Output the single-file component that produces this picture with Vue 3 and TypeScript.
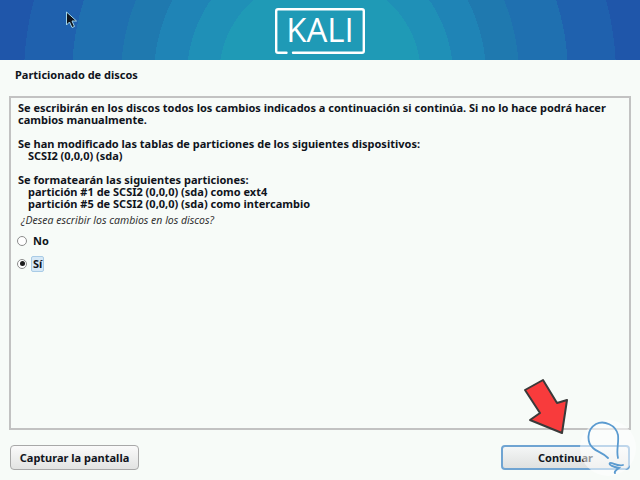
<template>
  <div class="installer">
    <header class="banner">
      <svg class="logo" width="90" height="46" viewBox="0 0 90 46" aria-hidden="true">
        <path d="M11.500 44.800 H3 a1.800 1.800 0 0 1 -1.800 -1.800 V3 a1.800 1.800 0 0 1 1.800 -1.800 H87 a1.800 1.800 0 0 1 1.800 1.800 V43 a1.800 1.800 0 0 1 -1.800 1.800 H18" fill="none" stroke="#fff" stroke-width="2.400" stroke-linecap="round" />
      </svg>
      <span class="logo-text">KALI</span>
    </header>

    <main class="content">
      <h1 class="step-title">Particionado de discos</h1>
      <section class="frame">
        <p class="line">Se escribirán en los discos todos los cambios indicados a continuación si continúa. Si no lo hace podrá hacer<br />cambios manualmente.</p>
        <p class="line gap">Se han modificado las tablas de particiones de los siguientes dispositivos:<br /><span class="indent">SCSI2 (0,0,0) (sda)</span></p>
        <p class="line gap">
          Se formatearán las siguientes particiones:<br />
          <span class="indent">partición #1 de SCSI2 (0,0,0) (sda) como ext4</span><br />
          <span class="indent">partición #5 de SCSI2 (0,0,0) (sda) como intercambio</span>
        </p>
        <p class="question">¿Desea escribir los cambios en los discos?</p>
        <div v-for="option in options" :key="option" class="option">
          <span class="radio" :class="{ checked: option === selected }"></span>
          <span class="option-label" :class="{ focused: option === selected }">{{ option }}</span>
        </div>
      </section>
      <footer class="actions">
        <button class="btn">Capturar la pantalla</button>
        <button class="btn primary">Continuar</button>
      </footer>
    </main>

    <svg class="cursor" width="14" height="18" viewBox="0 0 14 18" aria-hidden="true">
      <path d="M1.500 1 V14 L4.500 11 L7 16.500 L9.500 15.500 L7 10 H11.500 Z" fill="#10141c" stroke="#9fd4ea" stroke-width="1" />
    </svg>

    <svg class="arrow" width="52" height="62" viewBox="0 0 52 62" aria-hidden="true">
      <path d="M23 5 L5 15 L20 38 L10 45 L42 58 L47 25 L37 28 Z" fill="#f83b3c" stroke="#3a3a3a" stroke-width="2" stroke-linejoin="round" />
    </svg>

    <div class="watermark">
      <svg width="56" height="56" viewBox="0 0 56 56" aria-hidden="true">
        <path d="M28 38 C22 32 17 32 13 28 C7 23 6 10 16 4 C24 0 36 5 38 15 C39 24 36 30 38 38 M43 45 C38 47 32 42 30 43 C28 45 34 47 39 48 C36 50 34 52 35 53" fill="none" stroke="#5b9bd0" stroke-width="1.800" stroke-linecap="round" />
      </svg>
    </div>
  </div>
</template>

<script setup lang="ts">
const options: string[] = ["No", "Sí"];
const selected = "Sí";
</script>

<style>
html,
body {
  margin: 0;
  background: #f7fbf8;
}
</style>

<style scoped>
.installer {
  position: relative;
  width: 640px;
  height: 480px;
  overflow: hidden;
  display: flex;
  flex-direction: column;
  background: #f7fbf8;
  font-family: "Noto Sans", "DejaVu Sans", sans-serif;
  color: #10141c;
}

.banner {
  position: relative;
  flex: 0 0 60px;
  display: flex;
  align-items: center;
  justify-content: center;
  background: radial-gradient(
    circle at 320px 76px,
    #1f9ab6 0 101px,
    #1f90b7 101px 133px,
    #1f84b6 133px 166px,
    #1f79af 166px 199px,
    #1f70b0 199px 248px,
    #1f61ae 248px 296px,
    #1f56aa 296px
  );
}

.logo {
  position: absolute;
  left: 275px;
  top: 8px;
}

.logo-text {
  position: relative;
  font-family: "Open Sans", "Noto Sans", sans-serif;
  font-size: 33px;
  line-height: 32px;
  color: #fff;
}

.content {
  flex: 1;
  min-height: 0;
  display: flex;
  flex-direction: column;
  padding: 0 9px 10px 9px;
}

.step-title {
  margin: 0;
  padding: 6px 6px 0;
  height: 30px;
  font-size: 11px;
  line-height: 18px;
  font-weight: 700;
}

.frame {
  flex: 1;
  min-height: 0;
  border: 2px solid #c2c2c2;
  padding: 4px 7px 0 7px;
  font-size: 11px;
  font-weight: 700;
}

.line {
  margin: 0;
  line-height: 12px;
  white-space: nowrap;
}

.gap {
  margin-top: 12px;
}

.indent {
  margin-left: 10px;
}

.question {
  margin: 3px 0 0 3px;
  font-size: 10.500px;
  line-height: 14px;
  font-weight: 400;
  font-style: italic;
  color: #333;
}

.option {
  display: flex;
  align-items: center;
  gap: 4px;
  height: 23px;
  margin-left: -1px;
}

.question + .option {
  margin-top: 2px;
}

.radio {
  position: relative;
  width: 8px;
  height: 8px;
  border: 1px solid #8c8c8c;
  border-radius: 50%;
  background: #fff;
}

.radio.checked::after {
  content: "";
  position: absolute;
  left: 1.500px;
  top: 1.500px;
  width: 5px;
  height: 5px;
  border-radius: 50%;
  background: #1c1c1c;
}

.option-label {
  padding: 1px 1px;
  line-height: 12px;
  border: 1px solid transparent;
  border-radius: 2px;
}

.option-label.focused {
  background: #d6e8f6;
  border-color: #a9cbe6;
}

.actions {
  display: flex;
  justify-content: space-between;
  padding: 0 0 0 1px;
  margin-top: 15px;
}

.btn {
  width: 129px;
  height: 25px;
  padding: 0;
  font-family: inherit;
  font-size: 11px;
  font-weight: 700;
  color: #10141c;
  border: 1px solid #a8a8a8;
  border-radius: 4px;
  background: linear-gradient(#fafafa, #e2e3e2);
}

.btn.primary {
  border: 2px solid #6fa4d2;
  background: linear-gradient(#f4f6f6, #dfe1e0);
  margin-right: 1px;
}

.cursor {
  position: absolute;
  left: 65px;
  top: 11px;
}

.arrow {
  position: absolute;
  left: 520px;
  top: 375px;
}

.watermark {
  position: absolute;
  left: 580px;
  top: 420px;
  width: 56px;
  height: 56px;
  border-radius: 50%;
  background: rgba(255, 255, 255, 0.55);
}
</style>
